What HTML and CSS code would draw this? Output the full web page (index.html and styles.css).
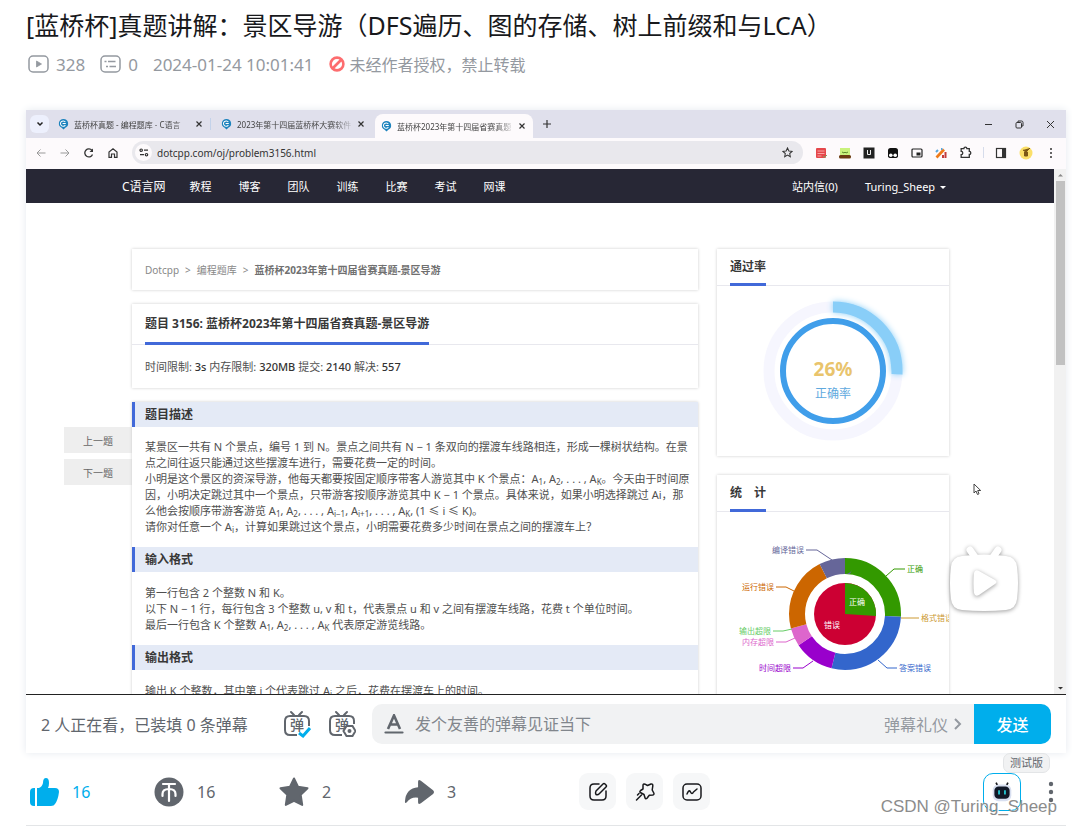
FILE: index.html
```html
<!DOCTYPE html>
<html lang="zh-CN">
<head>
<meta charset="utf-8">
<meta name="viewport" content="width=device-width, initial-scale=1">
<title>[蓝桥杯]真题讲解：景区导游</title>
<link rel="stylesheet" href="styles.css">
</head>
<body>
<svg class="defs" aria-hidden="true">
  <symbol id="favicon" viewBox="0 0 12 12">
    <path d="M6 0.5a5 5 0 0 1 2 9.600L6 12 4 10.100A5 5 0 0 1 6 0.500z" fill="#1d83bd"/>
    <path d="M8 3.900A2.900 2.900 0 1 0 8 7.200M5 5.500h3.500" fill="none" stroke="#fff" stroke-width="1.100"/>
  </symbol>
  <symbol id="close" viewBox="0 0 10 10"><path d="M2.500 2.500l5 5M7.500 2.500l-5 5" stroke="currentColor" stroke-width="1.200" fill="none"/></symbol>
</svg>
<main class="page">
  <header class="video-head">
    <h1 class="video-title">[蓝桥杯]真题讲解：景区导游（DFS遍历、图的存储、树上前缀和与LCA）</h1>
    <div class="meta">
      <span class="meta-item"><svg width="21" height="18" viewBox="0 0 21 18" fill="none" stroke="#9499a0" stroke-width="1.500"><rect x="1" y="1" width="19" height="16" rx="4"/><path d="M8.500 6v6l5-3z" fill="#9499a0" stroke="#9499a0" stroke-width=".8"/></svg><span class="num">328</span></span>
      <span class="meta-item"><svg width="21" height="18" viewBox="0 0 21 18" fill="none" stroke="#9499a0" stroke-width="1.500"><rect x="1" y="1" width="19" height="16" rx="4"/><path d="M4.500 6.500h2M8 6.500h7.500M6 11.500h2M9.500 11.500h6.500" stroke-width="1.300"/></svg><span class="num">0</span></span>
      <time class="num">2024-01-24 10:01:41</time>
      <span class="meta-item notice"><svg width="16" height="16" viewBox="0 0 16 16" fill="none" stroke="#fd6d6f" stroke-width="2.600"><circle cx="8" cy="8" r="6.400"/><path d="M4 12l8-8"/></svg>未经作者授权，禁止转载</span>
    </div>
  </header>

  <section class="player">
    <div class="screen">
      <div class="tabstrip">
        <button class="tab-search" aria-label="搜索标签页"><svg width="8" height="8" viewBox="0 0 8 8"><path d="M1.500 2.500L4 5l2.500-2.500" fill="none" stroke="#222" stroke-width="1.500"/></svg></button>
        <button class="tab"><svg width="11" height="12"><use href="#favicon"/></svg><span class="tab-text">蓝桥杯真题 - 编程题库 - C语言</span><svg width="10" height="10"><use href="#close"/></svg></button>
        <button class="tab split"><svg width="11" height="12"><use href="#favicon"/></svg><span class="tab-text">2023年第十四届蓝桥杯大赛软件</span><svg width="10" height="10"><use href="#close"/></svg></button>
        <button class="tab active"><svg width="11" height="12"><use href="#favicon"/></svg><span class="tab-text">蓝桥杯2023年第十四届省赛真题</span><svg width="10" height="10"><use href="#close"/></svg></button>
        <button class="new-tab" aria-label="新标签页"><svg width="8" height="8" viewBox="0 0 8 8"><path d="M4 0v8M0 4h8" stroke="#333" stroke-width="1.200"/></svg></button>
        <div class="window-controls">
          <svg width="9" height="9" viewBox="0 0 9 9"><path d="M1 4.500h7" stroke="#333"/></svg>
          <svg width="9" height="9" viewBox="0 0 9 9" fill="none" stroke="#333"><rect x="1" y="2.500" width="5.500" height="5.500" rx="1"/><path d="M3 2.500V1h3.500a1.500 1.500 0 0 1 1.500 1.500V6H6.500"/></svg>
          <svg width="9" height="9" viewBox="0 0 9 9"><path d="M1 1l7 7M8 1L1 8" stroke="#333"/></svg>
        </div>
      </div>
      <div class="addressbar">
        <div class="nav-icons">
          <svg width="10" height="10" viewBox="0 0 10 10" fill="none" stroke="#999"><path d="M9.500 5H1M4.500 1.500L1 5l3.500 3.500"/></svg>
          <svg width="10" height="10" viewBox="0 0 10 10" fill="none" stroke="#999"><path d="M0.500 5H9M5.500 1.500L9 5 5.500 8.500"/></svg>
          <svg width="10" height="10" viewBox="0 0 10 10" fill="none" stroke="#333" stroke-width="1.300"><path d="M8.500 6.500A4 4 0 1 1 8 2.500"/><path d="M9 0.500v3.500H5.500z" fill="#333" stroke="none"/></svg>
          <svg width="10" height="10" viewBox="0 0 10 10" fill="none" stroke="#333" stroke-width="1.200"><path d="M1 9.300V4l4-3.200L9 4v5.300H6.500V6h-3v3.300z"/></svg>
        </div>
        <div class="omnibox">
          <span class="site-info"><svg width="10" height="9" viewBox="0 0 10 9" fill="none" stroke="#333" stroke-width="1.200"><circle cx="2.200" cy="2.200" r="1.200"/><path d="M5 2.200h4M1 6.700h4"/><circle cx="7.500" cy="6.700" r="1.200"/></svg></span>
          <input class="url" aria-label="地址" value="dotcpp.com/oj/problem3156.html">
          <svg width="11" height="11" viewBox="0 0 12 12" fill="none" stroke="#333" stroke-width="1.100"><path d="M6 1l1.500 3.300 3.500.400-2.600 2.400.7 3.600L6 8.900l-3.100 1.800.7-3.600L1 4.700l3.500-.4z"/></svg>
        </div>
        <div class="extensions">
          <svg width="12" height="12" viewBox="0 0 12 12"><rect x="1" y="1" width="10" height="10" rx="1" fill="#e5474b"/><path d="M2.500 4h7M2.500 6.500h7M2.500 9h4" stroke="#fbb" stroke-width=".8"/><path d="M8 9l1.500 1.500L12 8" stroke="#7a6" fill="none"/></svg>
          <svg width="12" height="12" viewBox="0 0 12 12"><rect x="1" y="1" width="10" height="7" fill="#c9f27c"/><path d="M3 5l2 1 1-1 1 1 2-1" stroke="#5c8b2a" fill="none"/><rect y="8" width="12" height="3.500" rx="1.500" fill="#6b3b10"/></svg>
          <svg width="12" height="12" viewBox="0 0 12 12"><rect x=".5" y=".5" width="11" height="11" fill="#222"/><path d="M4.500 3v4.500h3V3" stroke="#eee" fill="none"/></svg>
          <svg width="12" height="12" viewBox="0 0 12 12"><path d="M1 6V3.500A2.500 2.500 0 0 1 3.500 1h5A2.500 2.500 0 0 1 11 3.500V8.500A2 2 0 0 1 9 11H3A2 2 0 0 1 1 8.500z" fill="#111"/><circle cx="3.800" cy="8.300" r="1.800" fill="#fff"/><circle cx="8.200" cy="8.300" r="1.800" fill="#fff"/></svg>
          <svg width="12" height="12" viewBox="0 0 12 12"><rect x="1" y="2" width="10" height="8" rx="1" fill="none" stroke="#222" stroke-width="1.200"/><rect x="5.500" y="5.500" width="4" height="3" fill="#222"/></svg>
          <svg width="12" height="12" viewBox="0 0 12 12" fill="none" stroke-width="2"><path d="M1.500 10.500l7.500-8" stroke="#ef7b1a" stroke-width="2.600"/><path d="M8 11V8M10.500 11V5" stroke="#c43b3b"/><path d="M1 5l2-2M6 2h1.500" stroke="#58a6dd"/></svg>
          <svg width="13" height="13" viewBox="0 0 12 12" fill="none" stroke="#333" stroke-width="1.200"><path d="M2 2.500h2.500a1.400 1.400 0 0 1 2.800 0H9.500V5a1.400 1.400 0 0 1 0 2.800V10.500H2V8a1.500 1.500 0 0 0 0-3z"/></svg>
          <span class="bar"></span>
          <svg width="12" height="12" viewBox="0 0 12 12"><rect x="1.500" y="1.500" width="9" height="9" fill="none" stroke="#333" stroke-width="1.200"/><path d="M7 1.500h3.500v9H7z" fill="#333"/></svg>
          <svg width="14" height="14" viewBox="0 0 14 14"><circle cx="7" cy="7" r="6.500" fill="#fbdf69"/><path d="M4 4l3 2 4-4M5.500 6h3v4h-3z" stroke="#7c5714" fill="#7c5714"/></svg>
          <svg width="12" height="12" viewBox="0 0 12 12" fill="#333"><circle cx="6" cy="2" r="1"/><circle cx="6" cy="6" r="1"/><circle cx="6" cy="10" r="1"/></svg>
        </div>
      </div>
      <div class="viewport">
        <div class="site">
          <nav class="site-nav">
            <a class="brand" href="#">C语言网</a>
            <a href="#">教程</a><a href="#">博客</a><a href="#">团队</a><a href="#">训练</a><a href="#">比赛</a><a href="#">考试</a><a href="#">网课</a>
            <a class="mail" href="#">站内信(0)</a>
            <a class="user" href="#">Turing_Sheep <span class="caret"></span></a>
          </nav>
          <div class="site-body">
            <div class="pager"><button>上一题</button><button>下一题</button></div>
            <div class="main-col">
              <div class="card crumbs"><a href="#">Dotcpp</a><span>&gt;</span><a href="#">编程题库</a><span>&gt;</span><strong>蓝桥杯2023年第十四届省赛真题-景区导游</strong></div>
              <div class="card">
                <div class="card-head"><h2>题目 3156: 蓝桥杯2023年第十四届省赛真题-景区导游</h2></div>
                <p class="limits">时间限制: <b>3s</b> 内存限制: <b>320MB</b> 提交: <b>2140</b> 解决: <b>557</b></p>
              </div>
              <article class="card problem">
                <h3>题目描述</h3>
                <p>某景区一共有 N 个景点，编号 1 到 N。景点之间共有 N − 1 条双向的摆渡车线路相连，形成一棵树状结构。在景<br>点之间往返只能通过这些摆渡车进行，需要花费一定的时间。<br>小明是这个景区的资深导游，他每天都要按固定顺序带客人游览其中 K 个景点：A<sub>1</sub>, A<sub>2</sub>, . . . , A<sub>K</sub>。今天由于时间原<br>因，小明决定跳过其中一个景点，只带游客按顺序游览其中 K − 1 个景点。具体来说，如果小明选择跳过 Ai，那<br>么他会按顺序带游客游览 A<sub>1</sub>, A<sub>2</sub>, . . . , A<sub>i−1</sub>, A<sub>i+1</sub>, . . . , A<sub>K</sub>, (1 ≤ i ≤ K)。<br>请你对任意一个 A<sub>i</sub>，计算如果跳过这个景点，小明需要花费多少时间在景点之间的摆渡车上？</p>
                <h3>输入格式</h3>
                <p>第一行包含 2 个整数 N 和 K。<br>以下 N − 1 行，每行包含 3 个整数 u, v 和 t，代表景点 u 和 v 之间有摆渡车线路，花费 t 个单位时间。<br>最后一行包含 K 个整数 A<sub>1</sub>, A<sub>2</sub>, . . . , A<sub>K</sub> 代表原定游览线路。</p>
                <h3>输出格式</h3>
                <p>输出 K 个整数，其中第 i 个代表跳过 A<sub>i</sub> 之后，花费在摆渡车上的时间。</p>
              </article>
            </div>
            <aside class="side-col">
              <div class="card">
                <div class="card-head"><h2>通过率</h2></div>
                <svg class="chart" viewBox="0 0 232 170" role="img" aria-label="正确率 26%">
                  <circle cx="116" cy="85" r="64" fill="none" stroke="#f6f6fe" stroke-width="11"/>
                  <circle class="gauge" cx="116" cy="85" r="64" pathLength="360" transform="rotate(-90 116 85)"/>
                  <circle cx="116" cy="85" r="50" fill="#fff" stroke="#409eea" stroke-width="6"/>
                  <text class="rate" x="116" y="90">26%</text>
                  <text class="rate-label" x="116" y="112">正确率</text>
                </svg>
              </div>
              <div class="card stats">
                <div class="card-head"><h2>统　计</h2></div>
                <svg class="chart" viewBox="0 0 232 190" role="img" aria-label="提交统计">
                  <g class="ring" transform="rotate(-90 128 102)">
                    <circle cx="128" cy="102" r="48" pathLength="360" stroke="#339900" stroke-dasharray="93 267"/>
                    <circle cx="128" cy="102" r="48" pathLength="360" stroke="#3366cc" stroke-dasharray="101 259" stroke-dashoffset="-93"/>
                    <circle cx="128" cy="102" r="48" pathLength="360" stroke="#9900cc" stroke-dasharray="42 318" stroke-dashoffset="-194"/>
                    <circle cx="128" cy="102" r="48" pathLength="360" stroke="#dd66cc" stroke-dasharray="19 341" stroke-dashoffset="-236"/>
                    <circle cx="128" cy="102" r="48" pathLength="360" stroke="#cc6600" stroke-dasharray="78 282" stroke-dashoffset="-255"/>
                    <circle cx="128" cy="102" r="48" pathLength="360" stroke="#666699" stroke-dasharray="27 333" stroke-dashoffset="-333"/>
                  </g>
                  <circle cx="128" cy="102" r="31" fill="#cc0033"/>
                  <path d="M128 102V71A31 31 0 0 1 159 104z" fill="#339900"/>
                  <g fill="none" stroke-width="1">
                    <path d="M89 38h11l15 10" stroke="#666699"/>
                    <path d="M169 64l8-7h11" stroke="#339900"/>
                    <path d="M184 106h18" stroke="#cc9933"/>
                    <path d="M161 148l9 8h10" stroke="#3366cc"/>
                    <path d="M76 156h10l10-7" stroke="#9900cc"/>
                    <path d="M59 130h10l9-4" stroke="#dd66cc"/>
                    <path d="M56 119h10l9-2" stroke="#66cc66"/>
                    <path d="M59 75h10l8 4" stroke="#cc6600"/>
                  </g>
                  <g class="label end">
                    <text x="87" y="41" fill="#666699">编译错误</text>
                    <text x="57" y="78" fill="#cc6600">运行错误</text>
                    <text x="54" y="122" fill="#66cc66">输出超限</text>
                    <text x="57" y="133" fill="#dd66cc">内存超限</text>
                    <text x="74" y="159" fill="#9900cc">时间超限</text>
                  </g>
                  <g class="label">
                    <text x="190" y="60" fill="#339900">正确</text>
                    <text x="204" y="109" fill="#cc9933">格式错误</text>
                    <text x="182" y="159" fill="#3366cc">答案错误</text>
                    <text x="132" y="93" fill="#fff">正确</text>
                    <text x="107" y="116" fill="#fff">错误</text>
                  </g>
                </svg>
              </div>
            </aside>
          </div>
        </div>
        <div class="scrollbar">
          <svg width="11" height="12" viewBox="0 0 11 12"><path d="M3 7.500L5.500 5 8 7.500z" fill="#888"/></svg>
          <span class="thumb"></span>
          <svg class="down" width="11" height="12" viewBox="0 0 11 12"><path d="M3 5h5L5.500 7.500z" fill="#333"/></svg>
        </div>
      </div>
      <svg class="cursor" width="9" height="13" viewBox="0 0 9 13"><path d="M1 1v9l2-2 1.500 3.500 1.500-.7L4.700 7.500h3z" fill="#fff" stroke="#444"/></svg>
      <button class="play" aria-label="播放">
        <svg width="84" height="84" viewBox="0 0 84 84">
          <g class="tv" fill="#fff"><path d="M28 13l7 10M56 13l-7 10" stroke="#fff" stroke-width="7" stroke-linecap="round"/><path d="M20 19Q42 16 64 19 74 20 75 30 77 46 75 62 74 72 64 73 42 75 20 73 10 72 9 62 7 46 9 30 10 20 20 19z"/></g>
          <path class="triangle" d="M32 36q1-4 5-2l16 9q3 2 0 4l-16 11q-4 2-5-2-1-10 0-20z" fill="#fff"/>
        </svg>
      </button>
    </div>
    <form class="sendbar">
      <span class="watching">2 人正在看，已装填 0 条弹幕</span>
      <button class="icon-btn" type="button" aria-label="弹幕开关">
        <svg width="28" height="28" viewBox="0 0 28 28" fill="none" stroke="#61666d" stroke-width="2"><path d="M8 2l3 3M19 2l-3 3" stroke-linecap="round"/><path d="M14 25H7q-5 0-5-5v-9q0-5 5-5h14q5 0 5 5v5"/><text class="dan" x="7" y="20">弹</text><path d="M16 23l4 3 7-8" stroke="#00aeec" stroke-width="3"/></svg>
      </button>
      <button class="icon-btn" type="button" aria-label="弹幕设置">
        <svg width="28" height="28" viewBox="0 0 28 28" fill="none" stroke="#61666d" stroke-width="2"><path d="M8 2l3 3M19 2l-3 3" stroke-linecap="round"/><path d="M14 25H7q-5 0-5-5v-9q0-5 5-5h14q5 0 5 5v3"/><text class="dan" x="7" y="20">弹</text><path d="M18.500 16h6l3 5-3 5h-6l-3-5z" fill="#fff"/><circle cx="21.500" cy="21" r="1" fill="#61666d"/></svg>
      </button>
      <div class="danmu-box">
        <svg width="20" height="20" viewBox="0 0 20 20" fill="none" stroke="#61666d" stroke-width="2.600"><path d="M4 15L10 1.500 16 15M6 10.500h8"/><path d="M1.500 18.500h17" stroke-linecap="round" stroke-width="2.200"/></svg>
        <input class="danmu-input" aria-label="弹幕" placeholder="发个友善的弹幕见证当下">
        <a class="etiquette" href="#">弹幕礼仪 <svg width="8" height="12" viewBox="0 0 8 12" fill="none" stroke="#9499a0" stroke-width="2"><path d="M1 1l5 5-5 5"/></svg></a>
      </div>
      <button class="send" type="button">发送</button>
    </form>
  </section>

  <section class="toolbar">
    <div class="actions">
      <button class="action liked"><svg width="30" height="30" viewBox="0 0 30 30" fill="#00aeec"><path d="M5 11h1v18H5q-4 0-4-4V15q0-4 4-4zM8 11h2q3-1 4-5 0-5 3-5 3 0 3 5 0 3-1 5h7q4 0 4 4-1 8-4 12-1 2-4 2H8z"/></svg><span>16</span></button>
      <button class="action"><svg width="30" height="30" viewBox="0 0 30 30"><circle cx="15" cy="15" r="14.500" fill="#61666d"/><path d="M9 7h12M15 7v17M8.500 19v-2q0-5 6.500-5t6.500 5v2" fill="none" stroke="#fff" stroke-width="2.200" stroke-linecap="round"/></svg><span>16</span></button>
      <button class="action"><svg width="30" height="30" viewBox="0 0 30 30" fill="#61666d" stroke="#61666d" stroke-width="2" stroke-linejoin="round"><path d="M15 1.500l4 8.200 9.500 1.500-6.800 6.700 1.500 10L15 23.800l-8.200 4.100 1.500-10L1.500 11.200 11 9.700z"/></svg><span>2</span></button>
      <button class="action"><svg width="30" height="30" viewBox="0 0 32 30" fill="#61666d"><path d="M15 4q0-3 3-1l13 10q2 2 0 4L18 27q-3 2-3-1v-5Q7 20 3 26q-2 2-2-1Q2 11 15 10z"/></svg><span>3</span></button>
    </div>
    <div class="tools">
      <button class="tool" aria-label="笔记"><svg width="20" height="20" viewBox="0 0 20 20"><path d="M11 2H6Q2 2 2 6v8q0 4 4 4h8q4 0 4-4V9"/><path d="M8 9l7-7q1-1 2 0l1 1q1 1 0 2l-7 7q-1 1-3 .5-1-1.500 0-3.500z"/></svg></button>
      <button class="tool" aria-label="收藏"><svg width="20" height="20" viewBox="0 0 20 20"><path d="M8 3.500q0-2 2-1.300l2.500 1.300L16 2q2-.3 1.800 2l-.6 4 1.600 3q.7 1.500-1 2l-3.500.3-2.300 3q-1.500 1.300-2-.5l-1-3.300-3.700-2q-1-1 .3-2L8 7zM6.500 13l-5 5M4 11.500l-1.500 1.500"/></svg></button>
      <button class="tool" aria-label="数据"><svg width="20" height="20" viewBox="0 0 20 20"><rect x="1" y="2" width="18" height="16" rx="4"/><path d="M5 12q2-5 3.500-2t3 0L15 7"/></svg></button>
    </div>
    <div class="assistant">
      <button class="robot" aria-label="AI 助手"><svg width="22" height="22" viewBox="0 0 24 26"><path d="M7 6L5 2M17 6l2-4" stroke="#18191c" stroke-width="2"/><rect x="1" y="4" width="22" height="20" rx="7" fill="#d8dff0"/><rect x="3" y="6.500" width="18" height="14.500" rx="5" fill="#111827"/><path d="M8.500 11v5M15.500 11v5" stroke="#25d5e0" stroke-width="2"/></svg></button>
      <span class="beta">测试版</span>
    </div>
    <button class="more" aria-label="更多"><svg width="6" height="22" viewBox="0 0 6 22" fill="#61666d"><circle cx="3" cy="3" r="2.200"/><circle cx="3" cy="11" r="2.200"/><circle cx="3" cy="19" r="2.200"/></svg></button>
    <span class="watermark">CSDN @Turing_Sheep</span>
  </section>
</main>
</body>
</html>
```

FILE: styles.css
```css
* { box-sizing: border-box; }
body {
  margin: 0;
  background: #fff;
  color: #18191c;
  font-family: "Noto Sans", "Noto Sans CJK SC", sans-serif;
  font-size: 16px;
}
button, input { font: inherit; color: inherit; border: 0; background: none; padding: 0; margin: 0; }
a { color: inherit; text-decoration: none; }
h1, h2, h3, p { margin: 0; }
svg { flex: none; display: block; }
.defs { position: absolute; width: 0; height: 0; }

.page { padding: 7px 6px 0 26px; }
.video-head { height: 103px; }
.video-title { font-size: 25px; line-height: 36px; font-weight: 400; white-space: nowrap; }
.meta { display: flex; align-items: center; gap: 15px; margin-top: 8px; padding-left: 2px; height: 26px; color: #9499a0; }
.meta-item { display: flex; align-items: center; gap: 7px; }
.meta .num { font-size: 17px; }
.notice { gap: 5px; }

.player { background: #fff; box-shadow: 0 0 8px #e5e9ef; }
.screen { position: relative; display: flex; flex-direction: column; aspect-ratio: 16 / 9; overflow: hidden; border-bottom: 1px solid #222; }

.tabstrip { display: flex; align-items: center; height: 28px; flex: none; padding: 0 11px 0 4px; background: #e0e0ec; }
.tab-search { display: grid; place-items: center; width: 19px; height: 18px; border-radius: 6px; background: #edf0fd; }
.tab { display: flex; align-items: center; gap: 5px; width: 161px; height: 24px; padding: 0 6px 0 9px; font-size: 8px; color: #444; }
.tab svg:last-child { margin-left: auto; color: #333; }
.tab-text { flex: 1; white-space: nowrap; text-align: left; mask-image: linear-gradient(90deg, #000 85%, #0003); }
.split { height: 12px; padding-left: 10px; border-left: 1px solid #c3d2ea; }
.tab.active { align-self: flex-end; width: 158px; margin-left: 4px; padding: 0 6px 0 6px; border-radius: 8px 8px 0 0; background: #fdfafc; }
.new-tab { padding: 4px 10px; }
.window-controls { display: flex; gap: 22px; margin-left: auto; }

.addressbar { display: flex; align-items: center; height: 31px; flex: none; gap: 18px; padding: 0 9px 2px 10px; background: #fdfafc; }
.nav-icons { display: flex; gap: 14px; }
.omnibox { display: flex; flex: 1; align-items: center; gap: 5px; height: 23px; margin-left: -4px; padding: 0 10px 0 3px; border-radius: 12px; background: #e9e8ed; }
.site-info { display: grid; place-items: center; width: 17px; height: 17px; border-radius: 50%; background: #fdfafc; }
.url { flex: 1; min-width: 0; font-size: 10px; color: #333; }
.extensions { display: flex; align-items: center; gap: 12px; margin-left: -6px; }
.bar { width: 1px; height: 11px; margin: 0 -1px; background: #d6dceb; }

.viewport { display: flex; flex: 1; min-height: 0; }
.site { flex: 1; min-width: 0; overflow: hidden; color: #505050; font-size: 11px; }
.site-nav { display: flex; align-items: center; gap: 27px; height: 34px; padding: 0 108px 0 96px; background: #272735; color: #fff; }
.site-nav a { white-space: nowrap; }
.site-nav .brand { font-size: 12px; margin-right: -3px; }
.site-nav .mail { margin-left: auto; }
.caret { display: inline-block; margin-left: 2px; border: 3px solid transparent; border-top-color: #fff; border-bottom: 0; vertical-align: middle; }
.site-body { display: flex; padding: 46px 105px 0 38px; }
.pager { display: flex; flex-direction: column; gap: 6px; width: 68px; padding-top: 178px; }
.pager button { height: 26px; background: #eee; color: #666; font-size: 10px; }
.main-col { flex: 1; min-width: 0; display: flex; flex-direction: column; gap: 14px; }
.side-col { width: 232px; margin-left: 19px; display: flex; flex-direction: column; gap: 19px; }
.card { background: #fff; box-shadow: 0 0 3px #ccc; overflow: hidden; }
.crumbs { display: flex; align-items: center; gap: 6px; height: 41px; padding: 0 13px; font-size: 10px; color: #888; white-space: nowrap; }
.crumbs strong { color: #707070; }
.card-head { display: flex; height: 37px; padding: 0 13px; border-bottom: 1px solid #e8e8ee; }
.card-head h2 { height: 37px; line-height: 36px; font-size: 12px; color: #383838; border-bottom: 3px solid #4169d9; white-space: nowrap; }
.main-col .card-head, .main-col .card-head h2 { height: 41px; line-height: 40px; }
.limits { padding: 0 13px; line-height: 43px; white-space: nowrap; }
.limits b { font-weight: 500; color: #333; }
.problem h3 { height: 25px; padding-left: 10px; border-left: 3px solid #4169d9; background: #e4eaf6; color: #383838; font-size: 12px; line-height: 25px; }
.problem p { padding: 12px 0 12px 13px; line-height: 16px; white-space: nowrap; }
.problem p ~ p { padding-top: 13px; }
sub { font-size: 8px; line-height: 0; vertical-align: -2px; }
.chart { width: 100%; }
.gauge { fill: none; stroke: #89cef8; stroke-width: 11; stroke-dasharray: 93 267; filter: drop-shadow(0 0 3px #89cef8); }
.rate { fill: #e9c46c; font-size: 19px; font-weight: 700; text-anchor: middle; }
.rate-label { fill: #5fa9de; font-size: 12px; text-anchor: middle; }
.ring circle { fill: none; stroke-width: 16; }
.label { font-size: 8px; }
.end { text-anchor: end; }
.scrollbar { display: flex; flex-direction: column; align-items: center; width: 12px; background: #f1f1f1; }
.thumb { width: 9px; height: 35%; background: #c1c1c1; }
.down { margin-top: auto; }

.cursor { position: absolute; right: 84px; bottom: 198px; }
.play { position: absolute; right: 40px; bottom: 73px; }
.tv, .triangle { filter: drop-shadow(0 1px 2px #0006); }

.sendbar { display: flex; align-items: center; height: 58px; padding: 0 15px 1px; color: #61666d; }
.watching { flex: none; width: 242px; white-space: nowrap; }
.icon-btn { margin-right: 17px; }
.icon-btn + .danmu-box { margin-left: -1px; }
.dan { font-size: 14px; font-weight: 500; fill: #61666d; stroke: none; }
.danmu-box { display: flex; flex: 1; align-items: center; min-width: 0; height: 40px; padding: 0 12px; gap: 11px; border-radius: 10px 0 0 10px; background: #f1f2f3; }
.danmu-input { flex: 1; min-width: 0; }
.danmu-input::placeholder { color: #81868c; opacity: 1; }
.etiquette { display: flex; align-items: center; gap: 6px; color: #9499a0; white-space: nowrap; }
.send { width: 77px; height: 40px; border-radius: 0 10px 10px 0; background: #00aeec; color: #fff; font-weight: 500; }

.toolbar { position: relative; display: flex; align-items: center; height: 73px; padding: 5px 12px 0 3px; border-bottom: 1px solid #e3e5e7; color: #61666d; }
.actions { display: flex; }
.action { display: flex; align-items: center; gap: 13px; width: 125px; font-size: 16px; }
.liked { color: #00aeec; }
.tools { display: flex; gap: 10px; margin-left: 50px; }
.tool { display: grid; place-items: center; width: 37px; height: 37px; border-radius: 9px; background: #f6f7f8; }
.tool svg { fill: none; stroke: #18191c; stroke-width: 1.5; stroke-linecap: round; stroke-linejoin: round; }
.assistant { position: relative; margin-left: auto; margin-right: 27px; }
.robot { display: grid; place-items: center; width: 38px; height: 38px; border: 1px solid #00aeec; border-radius: 10px; }
.beta { position: absolute; left: 20px; top: -20px; padding: 0 6px; height: 20px; line-height: 18px; border: 1px solid #e3e5e7; border-radius: 7px; background: #f1f2f3; font-size: 11px; white-space: nowrap; }
.watermark { position: absolute; right: 9px; bottom: 7px; font: 17px/22px "Liberation Sans", sans-serif; color: #8c8c8c; text-shadow: 1px 1px 0 #fff; }
```
